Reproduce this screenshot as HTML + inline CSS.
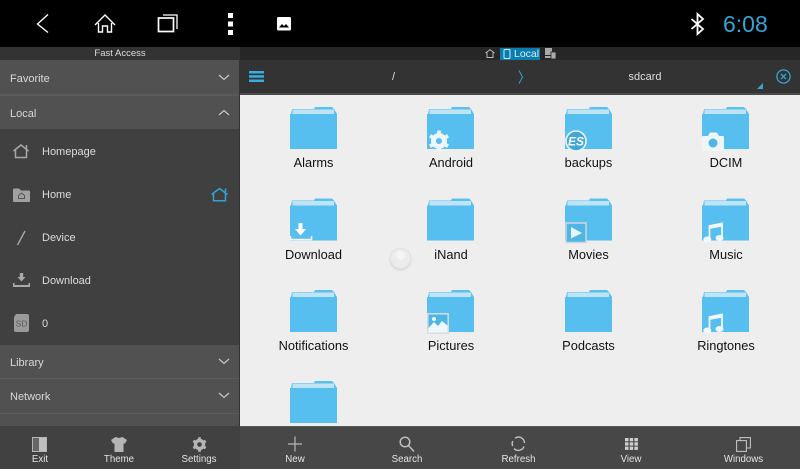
<!DOCTYPE html>
<html><head><meta charset="utf-8">
<style>
*{margin:0;padding:0;box-sizing:border-box}
html,body{width:800px;height:469px;overflow:hidden;background:#000;font-family:"Liberation Sans",sans-serif}
.a{position:absolute}
.t{position:absolute;white-space:nowrap;line-height:14px}
.c{transform:translateX(-50%)}
.s{color:#d8d8d8;font-size:11px;left:10px}
.m{color:#dcdcdc;font-size:11px;left:42px}
.b{color:#e4e4e4;font-size:9.700px;font-weight:400}
.l{color:#111;font-size:12.800px}
svg{position:absolute;overflow:visible}
</style></head>
<body>
<svg width="0" height="0" style="position:absolute"><defs>
<symbol id="f" viewBox="0 0 47 42">
<path d="M1 7 L2 2 H24 L25 0 H42 L44 2 L47 7 V42 H0 V7Z" fill="#5cc0ee"/>
<rect x="2.500" y="2.500" width="41.500" height="4.500" fill="#bfe4f5"/>
<rect x="0" y="7" width="47" height="35" fill="#57bfef"/>
</symbol>
<symbol id="ch" viewBox="0 0 12 7"><path d="M1 1L6 5.500L11 1" fill="none" stroke="#c8c8c8" stroke-width="1.200"/></symbol>
</defs></svg>

<!-- top bar -->
<div class="a" style="left:0;top:0;width:800px;height:47px;background:#000"></div>
<svg style="left:0;top:0" width="300" height="47" fill="none" stroke="#fff">
<path d="M48 14.500L37.500 24L48 32.500" stroke-width="1.400"/>
<path d="M95 25L105 15L115 25M98.500 23V32H102.500V26H107.500V32H111.500V23" stroke-width="1.400"/>
<path d="M163 15H177V29" stroke-width="1.300"/>
<rect x="158.500" y="18" width="15" height="13.500" stroke-width="1.700"/>
<g fill="#fff" stroke="none"><rect x="228" y="13" width="5" height="5"/><rect x="228" y="21.500" width="5" height="5"/><rect x="228" y="30" width="5" height="5"/>
<rect x="277" y="17" width="14" height="13.500" rx="1.500"/></g>
<path d="M279 27.500L282 24L284 26L286 24L289 27.500Z" fill="#000" stroke="none"/>
</svg>
<svg style="left:690px;top:12px" width="16" height="24" fill="none" stroke="#fff" stroke-width="1.800"><path d="M1.500 7L13 17L7.500 22V2L13 7L1.500 17"/></svg>
<div class="t" style="left:723px;top:11px;font-size:23px;line-height:26px;color:#33a5d6">6:08</div>

<!-- sidebar -->
<div class="a" style="left:0;top:47px;width:240px;height:13px;background:#333"></div>
<div class="t c" style="left:120px;top:47px;font-size:9.500px;color:#ddd">Fast Access</div>
<div class="a" style="left:0;top:60px;width:240px;height:34px;background:#515151"></div>
<div class="a" style="left:0;top:94px;width:240px;height:2px;background:#5a5a5a"></div>
<div class="a" style="left:0;top:96px;width:240px;height:33px;background:#515151"></div>
<div class="a" style="left:0;top:129px;width:240px;height:216px;background:#404040"></div>
<div class="a" style="left:0;top:345px;width:240px;height:33px;background:#515151"></div>
<div class="a" style="left:0;top:378px;width:240px;height:1px;background:#5c5c5c"></div>
<div class="a" style="left:0;top:379px;width:240px;height:34px;background:#515151"></div>
<div class="a" style="left:0;top:413px;width:240px;height:1px;background:#5c5c5c"></div>
<div class="a" style="left:0;top:414px;width:240px;height:12px;background:#515151"></div>
<div class="a" style="left:0;top:426px;width:240px;height:43px;background:#414141"></div>
<div class="a" style="left:239px;top:60px;width:1px;height:366px;background:#333"></div>

<div class="t s" style="top:72px">Favorite</div>
<div class="t s" style="top:107px">Local</div>
<div class="t s" style="top:356px">Library</div>
<div class="t s" style="top:390px">Network</div>
<svg style="left:218px;top:74px" width="12" height="7"><use href="#ch"/></svg>
<svg style="left:218px;top:109px" width="12" height="7"><path d="M1 6L6 1.500L11 6" fill="none" stroke="#c8c8c8" stroke-width="1.200"/></svg>
<svg style="left:218px;top:358px" width="12" height="7"><use href="#ch"/></svg>
<svg style="left:218px;top:392px" width="12" height="7"><use href="#ch"/></svg>

<div class="t m" style="top:145px">Homepage</div>
<div class="t m" style="top:188px">Home</div>
<div class="t m" style="top:231px">Device</div>
<div class="t m" style="top:274px">Download</div>
<div class="t m" style="top:317px">0</div>

<svg style="left:13px;top:144px" width="17" height="15" fill="none" stroke="#a8a8a8" stroke-width="1.500"><path d="M.5 7L8 1L15.500 7M2.500 6V13.500H13.500V6M13.500 1V4.500"/></svg>
<svg style="left:13px;top:188px" width="17" height="14"><path d="M0 1.500Q0 .5 1 .5H6L8 2.500H16Q17 2.500 17 3.500V13Q17 14 16 14H1Q0 14 0 13Z" fill="#a0a0a0"/><path d="M5.500 7.500L8.500 5L11.500 7.500V10.500H5.500Z" fill="none" stroke="#555" stroke-width="1"/></svg>
<svg style="left:15px;top:230px" width="12" height="16"><path d="M10 1L2.500 15" stroke="#a8a8a8" stroke-width="1.400"/></svg>
<svg style="left:13px;top:273px" width="17" height="14" fill="#a8a8a8"><path d="M6.800 0H10.200V4H12.500L8.500 8.500L4.500 4H6.800Z"/><path d="M0 10H1.500V12H15.500V10H17V14H0Z"/></svg>
<svg style="left:14px;top:314px" width="15" height="18"><path d="M2 0H13Q15 0 15 2V16Q15 18 13 18H2Q0 18 0 16V3Z" fill="#9a9a9a"/><text x="7.500" y="12.500" font-size="8.500" font-family="Liberation Sans" text-anchor="middle" fill="#5a5a5a">SD</text></svg>
<svg style="left:211px;top:187px" width="17" height="15" fill="none" stroke="#32a4d4" stroke-width="1.500"><path d="M.5 7.500L8.500 1.500L16.500 7.500M2.500 6.500V13.800H14.500V6.500M14.500 1.500V5"/></svg>

<!-- sidebar bottom -->
<svg style="left:32px;top:437px" width="15" height="15"><rect x=".5" y=".5" width="14" height="14" fill="none" stroke="#b5b5b5" stroke-width="1"/><path d="M1 1H7V14H1Z" fill="#666"/><path d="M7 1H14V14H7Z" fill="#c0c0c0"/></svg>
<div class="t b c" style="left:40px;top:453px">Exit</div>
<svg style="left:111px;top:437px" width="16" height="15" fill="#b5b5b5"><path d="M4.500 0L8 1L11.500 0L16 3L14 6.500H12.500V15H3.500V6.500H2L0 3Z"/></svg>
<div class="t b c" style="left:119px;top:453px">Theme</div>
<svg style="left:192px;top:437px" width="15" height="15"><circle cx="7.500" cy="7.500" r="4" fill="none" stroke="#b5b5b5" stroke-width="3.400"/><path d="M7.500 .3V2.500M7.500 12.500V14.700M1.300 3.900L3.200 5M11.800 10L13.700 11.100M1.300 11.100L3.200 10M11.800 5L13.700 3.900" stroke="#b5b5b5" stroke-width="2.800"/></svg>
<div class="t b c" style="left:199px;top:453px">Settings</div>

<!-- right strips -->
<div class="a" style="left:240px;top:47px;width:560px;height:13px;background:#262626"></div>
<div class="a" style="left:240px;top:60px;width:560px;height:33px;background:#333"></div>
<div class="a" style="left:240px;top:93px;width:560px;height:2px;background:#4a4a4a"></div>
<div class="a" style="left:240px;top:95px;width:560px;height:331px;background:#eee"></div>
<div class="a" style="left:240px;top:426px;width:560px;height:43px;background:#474747;border-top:1px solid #5a5a5a"></div>

<svg style="left:485px;top:49px" width="10" height="9" fill="none" stroke="#bbb" stroke-width="1"><path d="M.5 4L5 .7L9.500 4M2 3.500V8.500H8V3.500"/></svg>
<div class="a" style="left:500px;top:48px;width:40px;height:12px;background:#0b7cae"></div>
<svg style="left:503px;top:49px" width="8" height="10" fill="none" stroke="#d8eef8" stroke-width="1"><rect x="1" y=".5" width="6" height="9" rx="1"/></svg>
<div class="t" style="left:514px;top:47px;font-size:10.500px;color:#d8eef8">Local</div>
<svg style="left:545px;top:48px" width="11" height="11" fill="#aaa"><rect x="0" y="0" width="7" height="7"/><rect x="0" y="8" width="7" height="2"/><rect x="6" y="4" width="5" height="7" stroke="#262626" stroke-width=".8"/></svg>

<svg style="left:249px;top:71px" width="15" height="11" fill="#3aaede"><rect width="15" height="2.500"/><rect y="4.200" width="15" height="2.500"/><rect y="8.500" width="15" height="2.500"/></svg>
<div class="t" style="left:392px;top:70px;font-size:11px;color:#ddd">/</div>
<svg style="left:518px;top:70px" width="6" height="14"><path d="M1 .5L4.500 7L1 13.500" fill="none" stroke="#36a5d3" stroke-width="1"/></svg>
<div class="t c" style="left:645px;top:70px;font-size:11px;color:#ddd">sdcard</div>
<svg style="left:757px;top:83px" width="7" height="6"><path d="M0 6L6 0V6Z" fill="#36a5d3"/></svg>
<svg style="left:776px;top:69px" width="15" height="15" fill="none" stroke="#36a5d3" stroke-width="1.300"><circle cx="7.500" cy="7.500" r="6.600"/><path d="M5 5L10 10M10 5L5 10"/></svg>

<!-- folders -->
<svg style="left:290px;top:107px" width="47" height="42"><use href="#f"/></svg>
<svg style="left:427px;top:107px" width="47" height="42"><use href="#f"/></svg>
<svg style="left:565px;top:107px" width="47" height="42"><use href="#f"/></svg>
<svg style="left:702px;top:107px" width="47" height="42"><use href="#f"/></svg>
<svg style="left:290px;top:198px" width="47" height="43"><use href="#f"/></svg>
<svg style="left:427px;top:198px" width="47" height="43"><use href="#f"/></svg>
<svg style="left:565px;top:198px" width="47" height="43"><use href="#f"/></svg>
<svg style="left:702px;top:198px" width="47" height="43"><use href="#f"/></svg>
<svg style="left:290px;top:290px" width="47" height="42"><use href="#f"/></svg>
<svg style="left:427px;top:290px" width="47" height="42"><use href="#f"/></svg>
<svg style="left:565px;top:290px" width="47" height="42"><use href="#f"/></svg>
<svg style="left:702px;top:290px" width="47" height="42"><use href="#f"/></svg>
<svg style="left:290px;top:381px" width="47" height="42"><use href="#f"/></svg>

<!-- overlays -->
<svg style="left:428px;top:130px" width="22" height="22"><circle cx="11" cy="11" r="5.500" fill="none" stroke="#eef6fa" stroke-width="5"/><path d="M11 .5V5M11 17V21.500M2 5.800L5.800 8M16.200 14L20 16.200M2 16.200L5.800 14M16.200 8L20 5.800" stroke="#eef6fa" stroke-width="3.800"/></svg>
<svg style="left:565px;top:130px" width="22" height="22"><circle cx="11" cy="11" r="10" fill="#3fa8d6" stroke="#eef6fa" stroke-width="1.600"/><text x="11" y="15.500" font-size="12" font-weight="700" font-style="italic" font-family="Liberation Sans" text-anchor="middle" fill="#fff">ES</text></svg>
<svg style="left:702px;top:132px" width="22" height="19"><path d="M1 4H6L8 .5H15L17 4H21Q22 4 22 5V18Q22 19 21 19H1Q0 19 0 18V5Q0 4 1 4Z" fill="#eef6fa"/><circle cx="11" cy="11" r="4.500" fill="#4fb5e4"/></svg>
<svg style="left:289px;top:222px" width="24" height="21"><path d="M1.500 14V17.500H22.500V14" fill="none" stroke="#f4f4f4" stroke-width="1.600"/><path d="M9.500 1H13.500V7H17L11.500 13.500L6 7H9.500Z" fill="#fff"/></svg>
<svg style="left:565px;top:222px" width="22" height="21"><rect x="1" y="1" width="20" height="19.500" fill="#4fb5e4" stroke="#cdd6db" stroke-width="1.500"/><path d="M6 5L17 11L6 16.500Z" fill="#eaf5fa"/></svg>
<svg style="left:703px;top:222px" width="21" height="21"><g fill="none" stroke="#f2f8fb" stroke-width="1.800"><path d="M6.500 17V4L19 1.500V15"/></g><path d="M6 3.500L19.500 1V4.500L6 7Z" fill="#f2f8fb"/><ellipse cx="4.300" cy="17.500" rx="4" ry="3" fill="#f2f8fb"/><ellipse cx="16.500" cy="16" rx="4" ry="3" fill="#f2f8fb"/></svg>
<svg style="left:427px;top:313px" width="22" height="21"><rect x=".8" y=".8" width="20.400" height="19.400" fill="#4fb5e4" stroke="#d5dde1" stroke-width="1.500"/><path d="M1.500 19.500V15L7 9L11 13L15 8L20.500 12.500V19.500Z" fill="#eef7fb"/><circle cx="7" cy="6" r="2" fill="#eef7fb"/></svg>
<svg style="left:703px;top:313px" width="21" height="21"><g fill="none" stroke="#f2f8fb" stroke-width="1.800"><path d="M6.500 17V4L19 1.500V15"/></g><path d="M6 3.500L19.500 1V4.500L6 7Z" fill="#f2f8fb"/><ellipse cx="4.300" cy="17.500" rx="4" ry="3" fill="#f2f8fb"/><ellipse cx="16.500" cy="16" rx="4" ry="3" fill="#f2f8fb"/></svg>

<!-- labels -->
<div class="t l c" style="left:313.500px;top:156px">Alarms</div>
<div class="t l c" style="left:451px;top:156px">Android</div>
<div class="t l c" style="left:588.500px;top:156px">backups</div>
<div class="t l c" style="left:726px;top:156px">DCIM</div>
<div class="t l c" style="left:313.500px;top:248px">Download</div>
<div class="t l c" style="left:451px;top:248px">iNand</div>
<div class="t l c" style="left:588.500px;top:248px">Movies</div>
<div class="t l c" style="left:726px;top:248px">Music</div>
<div class="t l c" style="left:313.500px;top:339px">Notifications</div>
<div class="t l c" style="left:451px;top:339px">Pictures</div>
<div class="t l c" style="left:588.500px;top:339px">Podcasts</div>
<div class="t l c" style="left:726px;top:339px">Ringtones</div>

<!-- spinner -->
<div class="a" style="left:390px;top:248px;width:21px;height:21px;border-radius:50%;background:#ececec;border:1px solid #e2e2e2;box-shadow:0 1px 2px #cfcfcf"></div>
<div class="a" style="left:396px;top:251px;width:9px;height:9px;border-radius:50%;background:#f4f4f4"></div>

<!-- bottom right -->
<svg style="left:285px;top:436px" width="20" height="16"><path d="M10 .5V15.500M3 8H17" stroke="#b8b8b8" stroke-width="1.200"/></svg>
<div class="t b c" style="left:295px;top:453px">New</div>
<svg style="left:398px;top:436px" width="18" height="16" fill="none" stroke="#c0c0c0" stroke-width="1.500"><circle cx="7" cy="6" r="4.800"/><path d="M10.500 9.500L16 15.500"/></svg>
<div class="t b c" style="left:407px;top:453px">Search</div>
<svg style="left:511px;top:436px" width="15" height="15" fill="none" stroke="#c0c0c0" stroke-width="1.400"><path d="M4 2.200A6 6 0 0 1 13.500 7M13 10.500A6 6 0 0 1 3 12.500M1.700 10A6 6 0 0 1 1.800 5"/></svg>
<div class="t b c" style="left:518.500px;top:453px">Refresh</div>
<svg style="left:625px;top:438px" width="13" height="12" fill="#d0d0d0"><rect width="3.500" height="3.300"/><rect x="4.700" width="3.500" height="3.300"/><rect x="9.400" width="3.500" height="3.300"/><rect y="4.300" width="3.500" height="3.300"/><rect x="4.700" y="4.300" width="3.500" height="3.300"/><rect x="9.400" y="4.300" width="3.500" height="3.300"/><rect y="8.600" width="3.500" height="3.300"/><rect x="4.700" y="8.600" width="3.500" height="3.300"/><rect x="9.400" y="8.600" width="3.500" height="3.300"/></svg>
<div class="t b c" style="left:631px;top:453px">View</div>
<svg style="left:736px;top:437px" width="15" height="15" fill="none" stroke="#c0c0c0" stroke-width="1.100"><rect x=".6" y="3.600" width="9.800" height="10.800"/><path d="M4 3.500V.6H14.400V11H10.500"/></svg>
<div class="t b c" style="left:743.500px;top:453px">Windows</div>
</body></html>
